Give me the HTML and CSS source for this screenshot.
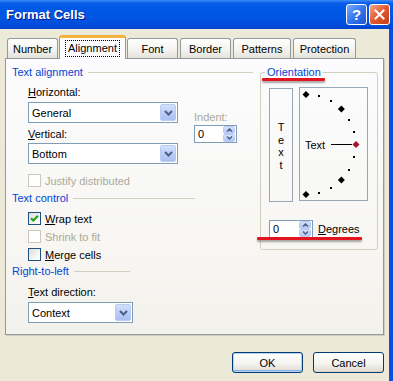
FILE: index.html
```html
<!DOCTYPE html>
<html lang="en">
<head>
    <meta charset="UTF-8">
    <title>Format Cells</title>
    <link rel="stylesheet" href="styles.css">
</head>
<body>
    <div class="window">
        <div class="titlebar">
            <span class="title">Format Cells</span>
            <div class="caption-btns">
                <span class="cap-btn help">?</span>
                <span class="cap-btn close">
                    <svg width="13" height="13" viewBox="0 0 13 13"><path d="M2.5 2.5L10.5 10.5M10.5 2.5L2.5 10.5" stroke="#fff" stroke-width="2" stroke-linecap="square"/></svg>
                </span>
            </div>
        </div>

        <div class="frame">
            <div class="tabs">
                <div class="tab tab-number">Number</div>
                <div class="tab tab-align active"><span class="focus">Alignment</span></div>
                <div class="tab tab-font">Font</div>
                <div class="tab tab-border">Border</div>
                <div class="tab tab-patterns">Patterns</div>
                <div class="tab tab-protection">Protection</div>
            </div>

            <div class="panel">
                <div class="left">
                    <div class="sep sep-align">Text alignment</div>

                    <div class="align-row">
                        <div class="align-col">
                            <div class="label"><u>H</u>orizontal:</div>
                            <div class="select select-wide">
                                <span>General</span>
                                <span class="drop"><svg width="9" height="6" viewBox="0 0 9 6"><path d="M1 1L4.5 4.5L8 1" fill="none" stroke="#4D6185" stroke-width="2"/></svg></span>
                            </div>
                            <div class="label label-v"><u>V</u>ertical:</div>
                            <div class="select select-wide select-v">
                                <span>Bottom</span>
                                <span class="drop"><svg width="9" height="6" viewBox="0 0 9 6"><path d="M1 1L4.5 4.5L8 1" fill="none" stroke="#4D6185" stroke-width="2"/></svg></span>
                            </div>
                        </div>
                        <div class="indent">
                            <div class="label disabled">Indent:</div>
                            <div class="spin spin-indent">
                                <span>0</span>
                                <span class="spin-btns">
                                    <span class="spin-btn"><svg width="7" height="4" viewBox="0 0 7 4"><path d="M1 3.5L3.5 1L6 3.5" fill="none" stroke="#4D6185" stroke-width="1.5"/></svg></span>
                                    <span class="spin-btn"><svg width="7" height="4" viewBox="0 0 7 4"><path d="M1 0.5L3.5 3L6 0.5" fill="none" stroke="#4D6185" stroke-width="1.5"/></svg></span>
                                </span>
                            </div>
                        </div>
                    </div>

                    <div class="check-row row-justify disabled">
                        <span class="cb"></span>
                        <span>Justify distributed</span>
                    </div>

                    <div class="sep sep-control">Text control</div>

                    <div class="check-row row-wrap">
                        <span class="cb">
                            <svg width="11" height="11" viewBox="0 0 11 11"><path d="M2 5.2L4.3 7.5L9 2.8" fill="none" stroke="#21A121" stroke-width="2.2"/></svg>
                        </span>
                        <span><u>W</u>rap text</span>
                    </div>
                    <div class="check-row row-next disabled">
                        <span class="cb"></span>
                        <span>Shrink to fit</span>
                    </div>
                    <div class="check-row row-next">
                        <span class="cb"></span>
                        <span><u>M</u>erge cells</span>
                    </div>

                    <div class="sep sep-rtl">Right-to-left</div>
                    <div class="label label-dir"><u>T</u>ext direction:</div>
                    <div class="select select-dir">
                        <span>Context</span>
                        <span class="drop"><svg width="9" height="6" viewBox="0 0 9 6"><path d="M1 1L4.5 4.5L8 1" fill="none" stroke="#4D6185" stroke-width="2"/></svg></span>
                    </div>
                </div>

                <fieldset class="orient">
                    <legend>Orientation</legend>
                    <div class="orient-row">
                        <div class="vtext">
                            <span>T</span><span>e</span><span>x</span><span>t</span>
                        </div>
                        <div class="dial">
                            <svg width="67" height="112" viewBox="0 0 67 112">
                                <path d="M6 3L9.5 6.5L6 10L2.5 6.5Z" fill="#000"/>
                                <path d="M41.4 17.6L44.9 21.1L41.4 24.6L37.9 21.1Z" fill="#000"/>
                                <path d="M41.4 88.4L44.9 91.9L41.4 95.4L37.9 91.9Z" fill="#000"/>
                                <path d="M6 103L9.5 106.5L6 110L2.5 106.5Z" fill="#000"/>
                                <path d="M56 53L59.5 56.5L56 60L52.5 56.5Z" fill="#A3142B"/>
                                <rect x="18" y="7" width="2" height="2" fill="#000"/>
                                <rect x="30" y="12" width="2" height="2" fill="#000"/>
                                <rect x="48" y="31" width="2" height="2" fill="#000"/>
                                <rect x="53" y="43" width="2" height="2" fill="#000"/>
                                <rect x="53" y="68" width="2" height="2" fill="#000"/>
                                <rect x="48" y="81" width="2" height="2" fill="#000"/>
                                <rect x="30" y="99" width="2" height="2" fill="#000"/>
                                <rect x="18" y="104" width="2" height="2" fill="#000"/>
                                <line x1="31" y1="56.5" x2="52" y2="56.5" stroke="#000" stroke-width="1"/>
                                <text x="5" y="60.5" class="dial-text">Text</text>
                            </svg>
                        </div>
                    </div>
                    <div class="degrees-row">
                        <div class="spin spin-deg">
                            <span>0</span>
                            <span class="spin-btns">
                                <span class="spin-btn"><svg width="7" height="4" viewBox="0 0 7 4"><path d="M1 3.5L3.5 1L6 3.5" fill="none" stroke="#4D6185" stroke-width="1.5"/></svg></span>
                                <span class="spin-btn"><svg width="7" height="4" viewBox="0 0 7 4"><path d="M1 0.5L3.5 3L6 0.5" fill="none" stroke="#4D6185" stroke-width="1.5"/></svg></span>
                            </span>
                        </div>
                        <span class="deg-label"><u>D</u>egrees</span>
                    </div>
                </fieldset>
            </div>

            <div class="buttons">
                <div class="btn btn-default">OK</div>
                <div class="btn">Cancel</div>
            </div>
        </div>

        <!-- hand-drawn annotation marks over the dialog -->
        <div class="mark mark-orient"></div>
        <div class="mark mark-degrees"></div>
    </div>
</body>
</html>
```

FILE: styles.css
```css
body {
    margin: 0;
    background: #ECE9D8;
    font-family: "Liberation Sans", Arial, sans-serif;
    font-size: 11px;
    color: #000;
}
.window {
    position: relative;
    width: 393px;
    height: 381px;
    overflow: hidden;
}
.titlebar {
    height: 29px;
    box-sizing: border-box;
    display: flex;
    align-items: center;
    justify-content: space-between;
    padding: 0 3px 0 6px;
    background: linear-gradient(#3D8DF7 0, #0A5FE9 3px, #0058E6 8px, #0055E3 60%, #004DDA 85%, #0043CF 100%);
}
.title {
    color: #fff;
    font-weight: bold;
    font-size: 13px;
    text-shadow: 1px 1px #0A1883;
}
.caption-btns { display: flex; gap: 2px; }
.cap-btn {
    width: 21px;
    height: 21px;
    box-sizing: border-box;
    border: 1px solid #fff;
    border-radius: 3px;
    display: flex;
    align-items: center;
    justify-content: center;
}
.help {
    background: linear-gradient(135deg, #7AACFB, #3072EE 55%, #1F55D0);
    color: #fff;
    font-weight: bold;
    font-size: 15px;
}
.close {
    background: linear-gradient(135deg, #F3A58A, #E2582F 50%, #C23E14);
}
.frame {
    height: 352px;
    box-sizing: border-box;
    border-right: 4px solid #0A4FE2;
    padding-top: 6px;
}
.tabs {
    position: relative;
    z-index: 1;
    display: flex;
    align-items: flex-end;
    height: 23px;
    padding-left: 7px;
}
.tab {
    height: 20px;
    box-sizing: border-box;
    border: 1px solid #919B9C;
    border-bottom: none;
    border-radius: 3px 3px 0 0;
    background: linear-gradient(#FFFFFF, #F3F2EE 60%, #E4E2DA);
    display: flex;
    align-items: center;
    justify-content: center;
    padding-top: 1px;
}
.tab-number { width: 51px; margin-right: 1px; }
.tab-align { width: 67px; margin-right: 1px; }
.tab-font { width: 51px; margin-right: 2px; }
.tab-border { width: 51px; margin-right: 2px; }
.tab-patterns { width: 58px; margin-right: 2px; }
.tab-protection { width: 63px; }
.tab.active {
    height: 24px;
    margin-bottom: -1px;
    border-top: 3px solid #F4B43C;
    background: #FCFCFE;
    padding-top: 0;
}
.focus {
    border: 1px dotted #000;
    padding: 1px 2px;
    line-height: 13px;
}
.panel {
    margin-left: 5px;
    width: 379px;
    height: 277px;
    box-sizing: border-box;
    border: 1px solid #919B9C;
    box-shadow: 1px 1px 0 #D0CEBF;
    background: linear-gradient(#FCFCFE, #F7F6F2 70%, #F2F1EC);
    display: flex;
    align-items: flex-start;
    padding: 7px 0 0 6px;
}
.left {
    width: 241px;
    margin-right: 7px;
}
.sep {
    display: flex;
    align-items: center;
    height: 13px;
    line-height: 13px;
    color: #0046D5;
}
.sep::after {
    content: "";
    flex: 1;
    border-top: 1px solid #D0D0BF;
    margin-left: 5px;
}
.sep-align { width: 241px; }
.sep-control { width: 183px; margin-top: 5px; }
.sep-rtl { width: 118px; margin-top: 4px; }
.label {
    height: 13px;
    line-height: 13px;
}
.disabled { color: #ACA899; }
.align-row {
    display: flex;
    margin-top: 7px;
    margin-left: 16px;
}
.align-col { width: 150px; }
.select {
    height: 21px;
    box-sizing: border-box;
    border: 1px solid #7F9DB9;
    background: #fff;
    display: flex;
    align-items: center;
    justify-content: space-between;
    padding-left: 3px;
    margin-top: 3px;
}
.select-wide { width: 150px; }
.select-v { margin-top: 2px; }
.label-v { margin-top: 5px; }
.drop {
    width: 16px;
    height: 17px;
    box-sizing: border-box;
    border: 1px solid #BACBF2;
    border-radius: 2px;
    background: linear-gradient(#D3E0FC, #BCCEF8 50%, #A9C0F3);
    display: flex;
    align-items: center;
    justify-content: center;
    margin-right: 1px;
}
.indent {
    margin-left: 16px;
    margin-top: 25px;
}
.spin {
    height: 18px;
    box-sizing: border-box;
    border: 1px solid #7F9DB9;
    background: #fff;
    display: flex;
    align-items: center;
    justify-content: space-between;
    padding-left: 3px;
}
.spin-indent { width: 43px; margin-top: 1px; }
.spin-deg { width: 44px; }
.spin-btns {
    display: flex;
    flex-direction: column;
    margin-right: 1px;
}
.spin-btn {
    width: 12px;
    height: 8px;
    box-sizing: border-box;
    border: 1px solid #BACBF2;
    border-radius: 2px;
    background: linear-gradient(#D3E0FC, #B4C8F6);
    display: flex;
    align-items: center;
    justify-content: center;
}
.check-row {
    display: flex;
    align-items: center;
    height: 13px;
    margin-left: 16px;
    gap: 4px;
}
.row-justify { margin-top: 10px; }
.row-wrap { margin-top: 7px; }
.row-next { margin-top: 5px; }
.cb {
    width: 13px;
    height: 13px;
    box-sizing: border-box;
    border: 1px solid #1C5180;
    background: linear-gradient(135deg, #DCDCD7, #F8F8F6 70%, #fff);
    display: flex;
    align-items: center;
    justify-content: center;
}
.check-row.disabled .cb {
    border-color: #CAC8BB;
    background: #fff;
}
.label-dir { margin-top: 8px; margin-left: 16px; }
.select-dir { width: 105px; margin-left: 16px; }
.orient {
    width: 118px;
    box-sizing: border-box;
    margin: 0;
    padding: 8px 0 11px 8px;
    border: 1px solid #D0D0BF;
    border-radius: 3px;
    min-width: 0;
}
.orient legend {
    color: #0046D5;
    line-height: 13px;
    padding: 0 2px;
    margin-left: -4px;
}
.orient-row {
    display: flex;
    align-items: flex-start;
}
.vtext {
    width: 24px;
    height: 114px;
    box-sizing: border-box;
    border: 1px solid #9AA6B8;
    margin-top: 1px;
    display: flex;
    flex-direction: column;
    align-items: center;
    padding-top: 32px;
    line-height: 12.5px;
}
.dial {
    width: 69px;
    height: 114px;
    box-sizing: border-box;
    border: 1px solid #9AA6B8;
    margin-left: 6px;
}
.dial svg { display: block; }
.dial-text {
    font-family: "Liberation Sans", Arial, sans-serif;
    font-size: 11px;
}
.degrees-row {
    display: flex;
    align-items: center;
    margin-top: 18px;
}
.deg-label { margin-left: 5px; }
.buttons {
    display: flex;
    justify-content: flex-end;
    gap: 10px;
    margin-top: 17px;
    padding-right: 5px;
}
.btn {
    width: 71px;
    height: 21px;
    box-sizing: border-box;
    border: 1px solid #003C74;
    border-radius: 3px;
    background: linear-gradient(#FFFFFF, #F4F4F0 55%, #E3E0D6 90%, #D6D0C5);
    display: flex;
    align-items: center;
    justify-content: center;
}
.btn-default {
    box-shadow: inset 0 0 0 1px #B9D1F5, inset 0 -1px 0 1px #8CAEE6;
}
.mark {
    position: absolute;
    height: 3px;
    background: #E3141E;
    border-radius: 1px;
    box-shadow: 0 2px 2px rgba(60, 60, 60, 0.45);
}
.mark-orient { left: 262px; top: 78px; width: 63px; }
.mark-degrees { left: 257px; top: 237px; width: 105px; }
```
